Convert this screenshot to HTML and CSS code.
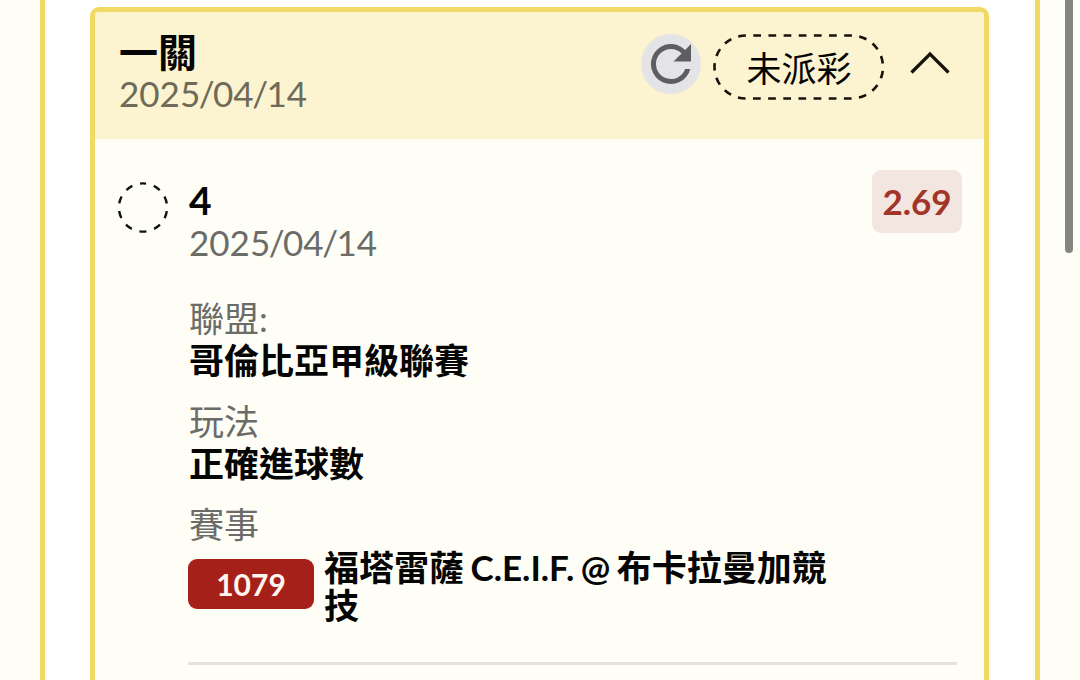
FILE: index.html
```html
<!DOCTYPE html>
<html lang="zh-Hant">
<head>
<meta charset="utf-8">
<title>2025/04/14</title>
<link rel="stylesheet" href="styles.css">
</head>
<body>
<div class="scrollbar"></div>
<main class="panel">
  <section class="card">
    <header class="card-head">
      <div class="head-text">
        <div class="title">一關</div>
        <div class="date">2025<span>/</span>04<span>/</span>14</div>
      </div>
      <div class="refresh">
        <svg width="60" height="60" viewBox="0 0 24 24"><path fill="#5e5e62" d="M17.65 6.35A8 8 0 1 0 19.73 14h-2.08A6 6 0 1 1 12 6c1.66 0 3.14.69 4.22 1.78L13 11h7V4z"/></svg>
      </div>
      <div class="status">
        <svg class="outline" width="172" height="66" viewBox="0 0 172 66"><path d="M1.500 33A31.500 31.500 0 0 1 33 1.500H138.500A31.500 31.500 0 0 1 138.500 64.500H33A31.500 31.500 0 0 1 1.500 33Z" fill="none" stroke="#15130b" stroke-width="2.6" stroke-dasharray="7.700 7.445" stroke-dashoffset="3.850"/></svg>
        <span>未派彩</span>
      </div>
      <svg class="chevron" width="42" height="26" viewBox="0 0 42 26"><path d="M2.500 22.500 21 4l18.500 18.500" fill="none" stroke="#15130b" stroke-width="3.200"/></svg>
    </header>
    <div class="card-body">
      <svg class="ring" width="52" height="52" viewBox="0 0 52 52"><circle cx="26" cy="26.500" r="24.1" fill="none" stroke="#111" stroke-width="2.4" stroke-dasharray="7.200 7.942" stroke-dashoffset="3.600" transform="rotate(-91 26 26.500)"/></svg>
      <div class="details">
        <div class="bet-head">
          <div>
            <div class="pick">4</div>
            <div class="date">2025<span>/</span>04<span>/</span>14</div>
          </div>
          <div class="odds">2.69</div>
        </div>
        <dl class="fields">
          <div><dt>聯盟:</dt><dd>哥倫比亞甲級聯賽</dd></div>
          <div><dt>玩法</dt><dd>正確進球數</dd></div>
          <div><dt>賽事</dt>
            <dd class="match"><span class="code">1079</span><span class="teams">福塔雷薩 C.E.I.F. @ 布卡拉曼加競技</span></dd>
          </div>
        </dl>
      </div>
    </div>
  </section>
</main>
</body>
</html>
```
FILE: styles.css
```css
* { box-sizing: border-box; }
body {
  margin: 0;
  height: 680px;
  overflow: hidden;
  background: #fefef6;
  color: #050505;
  font-family: Lato, "Noto Sans CJK TC", sans-serif;
  font-size: 35px;
  line-height: 42px;
}
.panel {
  width: 1000px;
  height: 680px;
  margin-left: 40px;
  padding: 7px 46px 0 45px;
  background: #fff;
  border: solid #f1da63;
  border-width: 0 5px;
}
.card {
  height: 673px;
  border: 5px solid #f1da63;
  border-bottom: 0;
  border-radius: 9px 9px 0 0;
  background: #fefef6;
}
.card-head {
  display: flex;
  align-items: flex-start;
  height: 127px;
  padding: 22px 33px 0 24px;
  border-radius: 4px 4px 0 0;
  background: #fcf3d0;
}
.head-text { flex: 1; margin-top: -2px; }
.title { font-size: 39px; font-weight: 700; line-height: 40px; }
.date { color: #6b6b68; }
.date span { margin: 0 -1.5px; }
.card-head .date { color: #6e6a58; }
.refresh {
  width: 60px;
  height: 60px;
  border-radius: 50%;
  background: #e4e4e6;
}
.refresh svg, .ring, .chevron { display: block; flex: none; }
.status {
  position: relative;
  width: 172px;
  height: 66px;
  margin-left: 12px;
  text-align: center;
  line-height: 68px;
}
.outline { position: absolute; left: 0; top: 0; }
.chevron { margin: 16px 0 0 24px; }
.card-body {
  display: flex;
  gap: 19px;
  padding: 40px 22px 0;
}
.ring { margin-top: 2px; }
.details { flex: 1; }
.bet-head {
  display: flex;
  justify-content: space-between;
}
.bet-head .date { padding-left: 1px; }
.pick { padding-left: 1px; font-size: 39px; font-weight: 700; }
.odds {
  width: 90px;
  height: 63px;
  margin-top: -9px;
  border-radius: 9px;
  background: #f3e6e0;
  color: #a2352a;
  font-weight: 700;
  line-height: 63px;
  text-align: center;
}
.fields {
  display: grid;
  gap: 19px;
  margin: 34px 5px 0 0;
  padding-bottom: 38px;
  border-bottom: 3px solid #e3e3dc;
}
dt { padding-left: 1px; color: #6b6b68; }
dd { margin: 0; padding-left: 1px; font-weight: 700; }
.match {
  display: flex;
  align-items: center;
  gap: 10px;
  padding: 3px 0 0;
}
.code {
  width: 126px;
  height: 50px;
  margin-top: -4px;
  border-radius: 9px;
  background: #a52018;
  color: #fff5ef;
  font-size: 30px;
  font-weight: 700;
  line-height: 51px;
  text-align: center;
}
.teams { width: 510px; line-height: 38px; word-spacing: -2px; }
.scrollbar {
  position: absolute;
  top: 0;
  left: 1065px;
  width: 8px;
  height: 253px;
  border-radius: 0 0 4px 4px;
  background: #858581;
}
```
